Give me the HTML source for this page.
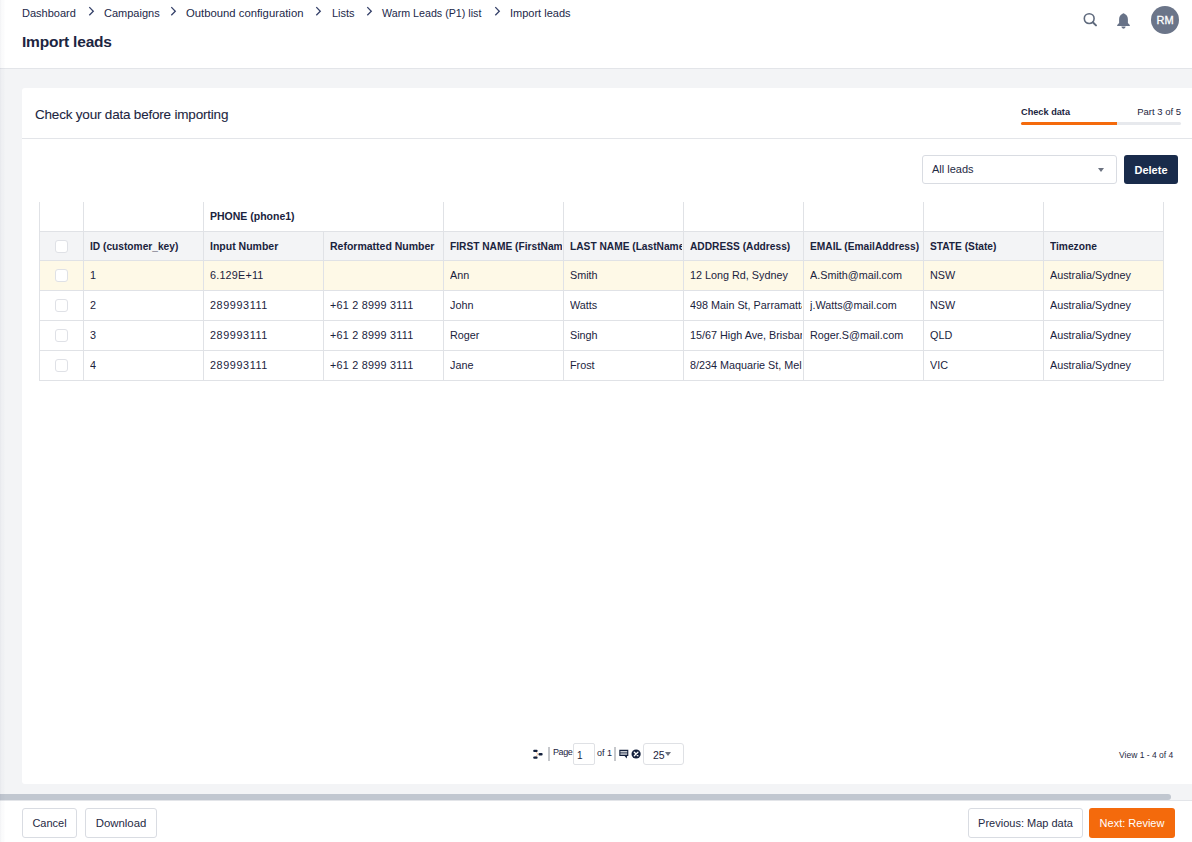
<!DOCTYPE html>
<html><head><meta charset="utf-8">
<style>
*{box-sizing:border-box;margin:0;padding:0}
html,body{width:1192px;height:842px;overflow:hidden;background:#fff;font-family:"Liberation Sans",sans-serif;color:#1f2a44}
.abs{position:absolute;white-space:nowrap}
#hdr{position:absolute;left:0;top:0;width:1192px;height:69px;background:#fff;border-bottom:1px solid #e3e5e9}
#gray{position:absolute;left:0;top:69px;width:1192px;height:732px;background:#f3f4f6}
#card{position:absolute;left:22px;top:88px;width:1180px;height:696px;background:#fff;border-radius:3px}
#leftsh{position:absolute;left:0;top:0;width:5px;height:842px;background:linear-gradient(to right,rgba(40,50,90,.05) 0 1px,rgba(40,50,90,.028) 1px 2px,rgba(40,50,90,.02) 2px 4px,rgba(40,50,90,.008) 4px 5px);z-index:50}
.bc{position:absolute;top:5px;font-size:11px;line-height:16px;color:#222849}
.chev{position:absolute;top:8px;width:6px;height:6px;border-right:1.2px solid #555b6e;border-top:1.2px solid #555b6e;transform:rotate(45deg)}
#foot{position:absolute;left:0;top:801px;width:1192px;height:41px;background:#fff}
.btn{position:absolute;height:30px;border:1px solid #d9dce2;border-radius:3px;background:#fff;font-size:11px;line-height:28px;text-align:center;color:#1f2a44}
.hl{position:absolute;left:39px;width:1125px;height:1px;background:#e0e2e6}
.vl{position:absolute;width:1px;background:#e0e2e6}
.ck{position:absolute;left:55px;width:13px;height:13px;border:1px solid #dfe1e6;border-radius:3px;background:#fff}
.th,.td{position:absolute;white-space:nowrap;overflow:hidden;width:112px;font-size:10.8px;line-height:14px;color:#1a233d}
.th{font-weight:bold;font-size:10.2px;margin-top:1px}
</style></head><body>
<div id="hdr"></div>
<div id="gray"></div>
<div id="leftsh"></div>

<!-- breadcrumbs -->
<div class="bc" style="left:22px">Dashboard</div>
<svg class="abs" style="left:88px;top:6px" width="8" height="12" viewBox="0 0 8 12"><path d="M1.3 1.1 L5.3 5.2 L1.3 9.3" fill="none" stroke="#36426a" stroke-width="1.3"/></svg>
<div class="bc" style="left:104px">Campaigns</div>
<svg class="abs" style="left:170px;top:6px" width="8" height="12" viewBox="0 0 8 12"><path d="M1.3 1.1 L5.3 5.2 L1.3 9.3" fill="none" stroke="#36426a" stroke-width="1.3"/></svg>
<div class="bc" style="left:186px;font-size:11.3px">Outbound configuration</div>
<svg class="abs" style="left:315px;top:6px" width="8" height="12" viewBox="0 0 8 12"><path d="M1.3 1.1 L5.3 5.2 L1.3 9.3" fill="none" stroke="#36426a" stroke-width="1.3"/></svg>
<div class="bc" style="left:332px">Lists</div>
<svg class="abs" style="left:366px;top:6px" width="8" height="12" viewBox="0 0 8 12"><path d="M1.3 1.1 L5.3 5.2 L1.3 9.3" fill="none" stroke="#36426a" stroke-width="1.3"/></svg>
<div class="bc" style="left:382px;font-size:10.7px">Warm Leads (P1) list</div>
<svg class="abs" style="left:494px;top:6px" width="8" height="12" viewBox="0 0 8 12"><path d="M1.3 1.1 L5.3 5.2 L1.3 9.3" fill="none" stroke="#36426a" stroke-width="1.3"/></svg>
<div class="bc" style="left:510px">Import leads</div>

<div class="abs" style="left:22px;top:33px;font-size:15.5px;line-height:18px;font-weight:bold;letter-spacing:-0.2px;color:#1c2541">Import leads</div>

<!-- icons top right -->
<svg class="abs" style="left:1082px;top:12px" width="16" height="16" viewBox="0 0 16 16"><circle cx="7.2" cy="6.6" r="4.9" fill="none" stroke="#5f6a7d" stroke-width="1.6"/><line x1="10.8" y1="10.2" x2="14" y2="13.4" stroke="#5f6a7d" stroke-width="2" stroke-linecap="round"/></svg>
<svg class="abs" style="left:1115px;top:12px" width="17" height="18" viewBox="0 0 17 18"><path d="M8.5 1.2C7.9 1.2 7.5 1.6 7.3 2.1 5.3 2.8 4.1 4.9 4.1 7.3v3.6L2.2 13v.9h12.6V13l-1.9-2.1V7.3c0-2.4-1.2-4.5-3.2-5.2C9.5 1.6 9.1 1.2 8.5 1.2z" fill="#677287"/><path d="M6.4 14.6a2.1 2.1 0 0 0 4.2 0z" fill="#677287"/></svg>
<div class="abs" style="left:1151px;top:6px;width:28px;height:28px;border-radius:50%;background:#6b7589;color:#fff;font-size:11px;line-height:28px;text-align:center;-webkit-text-stroke:.3px #fff">RM</div>

<div id="card"></div>
<div class="abs" style="left:35px;top:107px;font-size:13.5px;line-height:16px;letter-spacing:-.2px;-webkit-text-stroke:.08px #1c2541;color:#1c2541">Check your data before importing</div>
<div class="abs" style="left:22px;top:138px;width:1170px;height:1px;background:#e3e5e9"></div>

<!-- stepper -->
<div class="abs" style="left:1021px;top:105px;font-size:9.2px;line-height:14px;font-weight:bold;color:#1c2541">Check data</div>
<div class="abs" style="right:11px;top:105px;font-size:9.5px;line-height:14px;color:#1c2541">Part 3 of 5</div>
<div class="abs" style="left:1021px;top:122px;width:160px;height:3px;border-radius:2px;background:#e7e9ed"></div>
<div class="abs" style="left:1021px;top:122px;width:96px;height:3px;border-radius:2px 0 0 2px;background:#f46a0c"></div>

<!-- filter -->
<div class="abs" style="left:922px;top:155px;width:195px;height:29px;border:1px solid #d9dce2;border-radius:3px;background:#fff"></div>
<div class="abs" style="left:932px;top:161px;font-size:11px;line-height:16px;color:#1f2a44">All leads</div>
<div class="abs" style="left:1098px;top:168px;width:0;height:0;border-left:3.5px solid transparent;border-right:3.5px solid transparent;border-top:4px solid #6b7280"></div>
<div class="abs" style="left:1124px;top:155px;width:54px;height:29px;border-radius:3px;background:#192b4b;color:#fff;font-size:11px;line-height:30px;font-weight:bold;text-align:center">Delete</div>

<!-- table -->
<div class="abs" style="left:39px;top:232px;width:1124px;height:28px;background:#f3f4f6"></div>
<div class="abs" style="left:39px;top:261px;width:1124px;height:29px;background:#fef9e7"></div>
<div class="hl" style="top:231px"></div><div class="hl" style="top:260px"></div><div class="hl" style="top:290px"></div><div class="hl" style="top:320px"></div><div class="hl" style="top:350px"></div><div class="hl" style="top:380px"></div><div class="vl" style="left:39px;top:202px;height:179px"></div><div class="vl" style="left:83px;top:202px;height:179px"></div><div class="vl" style="left:203px;top:202px;height:179px"></div><div class="vl" style="left:323px;top:231px;height:150px"></div><div class="vl" style="left:443px;top:202px;height:179px"></div><div class="vl" style="left:563px;top:202px;height:179px"></div><div class="vl" style="left:683px;top:202px;height:179px"></div><div class="vl" style="left:803px;top:202px;height:179px"></div><div class="vl" style="left:923px;top:202px;height:179px"></div><div class="vl" style="left:1043px;top:202px;height:179px"></div><div class="vl" style="left:1163px;top:202px;height:179px"></div>
<div class="ck" style="top:240px"></div><div class="ck" style="top:269px"></div><div class="ck" style="top:299px"></div><div class="ck" style="top:329px"></div><div class="ck" style="top:359px"></div>
<div class="th" style="left:210px;top:208px;font-size:10.5px">PHONE (phone1)</div>
<div class="th" style="left:90px;top:239px">ID (customer_key)</div><div class="th" style="left:210px;top:238px;font-size:10.5px">Input Number</div><div class="th" style="left:330px;top:238px;font-size:10.5px">Reformatted Number</div><div class="th" style="left:450px;top:239px">FIRST NAME (FirstName)</div><div class="th" style="left:570px;top:239px">LAST NAME (LastName)</div><div class="th" style="left:690px;top:239px">ADDRESS (Address)</div><div class="th" style="left:810px;top:239px">EMAIL (EmailAddress)</div><div class="th" style="left:930px;top:239px">STATE (State)</div><div class="th" style="left:1050px;top:239px">Timezone</div>
<div class="td" style="left:90px;top:268px">1</div><div class="td" style="left:210px;top:268px;letter-spacing:.2px">6.129E+11</div><div class="td" style="left:450px;top:268px">Ann</div><div class="td" style="left:570px;top:268px">Smith</div><div class="td" style="left:690px;top:268px">12 Long Rd, Sydney</div><div class="td" style="left:810px;top:268px">A.Smith@mail.com</div><div class="td" style="left:930px;top:268px">NSW</div><div class="td" style="left:1050px;top:268px">Australia/Sydney</div>
<div class="td" style="left:90px;top:298px">2</div><div class="td" style="left:210px;top:298px;letter-spacing:.6px">289993111</div><div class="td" style="left:330px;top:298px;letter-spacing:.25px">+61 2 8999 3111</div><div class="td" style="left:450px;top:298px">John</div><div class="td" style="left:570px;top:298px">Watts</div><div class="td" style="left:690px;top:298px">498 Main St, Parramatta</div><div class="td" style="left:810px;top:298px">j.Watts@mail.com</div><div class="td" style="left:930px;top:298px">NSW</div><div class="td" style="left:1050px;top:298px">Australia/Sydney</div>
<div class="td" style="left:90px;top:328px">3</div><div class="td" style="left:210px;top:328px;letter-spacing:.6px">289993111</div><div class="td" style="left:330px;top:328px;letter-spacing:.25px">+61 2 8999 3111</div><div class="td" style="left:450px;top:328px">Roger</div><div class="td" style="left:570px;top:328px">Singh</div><div class="td" style="left:690px;top:328px">15/67 High Ave, Brisbane</div><div class="td" style="left:810px;top:328px">Roger.S@mail.com</div><div class="td" style="left:930px;top:328px">QLD</div><div class="td" style="left:1050px;top:328px">Australia/Sydney</div>
<div class="td" style="left:90px;top:358px">4</div><div class="td" style="left:210px;top:358px;letter-spacing:.6px">289993111</div><div class="td" style="left:330px;top:358px;letter-spacing:.25px">+61 2 8999 3111</div><div class="td" style="left:450px;top:358px">Jane</div><div class="td" style="left:570px;top:358px">Frost</div><div class="td" style="left:690px;top:358px">8/234 Maquarie St, Melbourne</div><div class="td" style="left:930px;top:358px">VIC</div><div class="td" style="left:1050px;top:358px">Australia/Sydney</div>
<!-- pager -->
<div id="pager">
<svg class="abs" style="left:532px;top:748px" width="12" height="12" viewBox="0 0 12 12"><path d="M3 3 L6 6.2 L3 9.5" fill="none" stroke="#f0b080" stroke-width="0.8"/><rect x="1.2" y="1.8" width="4.4" height="2.3" rx="1" fill="#14213d"/><rect x="1.2" y="8.5" width="4.4" height="2.3" rx="1" fill="#14213d"/><rect x="6.5" y="5.1" width="4.1" height="2.3" rx="1" fill="#14213d"/></svg>
<div class="abs" style="left:548px;top:747px;width:2px;height:14px;background:#c6c8cc"></div>
<div class="abs" style="left:553px;top:746px;font-size:9px;line-height:12px;letter-spacing:-.4px;color:#1c2541">Page</div>
<div class="abs" style="left:573px;top:743px;width:22px;height:22px;border:1px solid #dfe1e5;border-radius:2px;background:#fff"></div>
<div class="abs" style="left:577px;top:749px;font-size:10px;line-height:14px;color:#1c2541">1</div>
<div class="abs" style="left:597px;top:747px;font-size:9px;line-height:12px;color:#1c2541">of 1</div>
<div class="abs" style="left:614px;top:747px;width:2px;height:14px;background:#c6c8cc"></div>
<svg class="abs" style="left:619px;top:749px" width="10" height="10" viewBox="0 0 10 10"><path d="M0.3 0.7 H9.3 V7.1 H8.1 L7.7 9.6 L5.6 7.1 H0.3 Z" fill="#14213d"/><rect x="1.4" y="2.0" width="6.8" height="1.5" fill="#c9cdd3"/><rect x="1.4" y="4.3" width="6.8" height="1.5" fill="#c9cdd3"/></svg>
<svg class="abs" style="left:631px;top:749px" width="10" height="10" viewBox="0 0 10 10"><circle cx="5.1" cy="5" r="4.6" fill="#14213d"/><path d="M3.3 3.2 L6.9 6.8 M6.9 3.2 L3.3 6.8" stroke="#fff" stroke-width="1.3" stroke-linecap="round"/></svg>
<div class="abs" style="left:643px;top:743px;width:41px;height:22px;border:1px solid #dfe1e5;border-radius:3px;background:#fff"></div>
<div class="abs" style="left:653px;top:748px;font-size:10.5px;line-height:14px;color:#1c2541">25</div>
<div class="abs" style="left:665px;top:752px;width:0;height:0;border-left:3px solid transparent;border-right:3px solid transparent;border-top:4px solid #6b7280"></div>
</div>
<div class="abs" style="left:1119px;top:749px;font-size:8.5px;line-height:12px;color:#1f2a44">View 1 - 4 of 4</div>

<!-- scrollbar -->
<div class="abs" style="left:-6px;top:794px;width:1177px;height:6px;border-radius:3px;background:#c1c7d0"></div>
<div class="abs" style="left:0;top:800px;width:1192px;height:1px;background:#e3e5e9"></div>

<!-- footer -->
<div class="btn" style="left:22px;top:808px;width:55px">Cancel</div>
<div class="btn" style="left:85px;top:808px;width:72px;font-size:11.4px">Download</div>
<div class="btn" style="left:968px;top:808px;width:115px">Previous: Map data</div>
<div class="abs" style="left:1089px;top:808px;width:86px;height:30px;border-radius:3px;background:#f46a0c;color:#fff;font-size:11px;line-height:30px;text-align:center">Next: Review</div>
</body></html>
